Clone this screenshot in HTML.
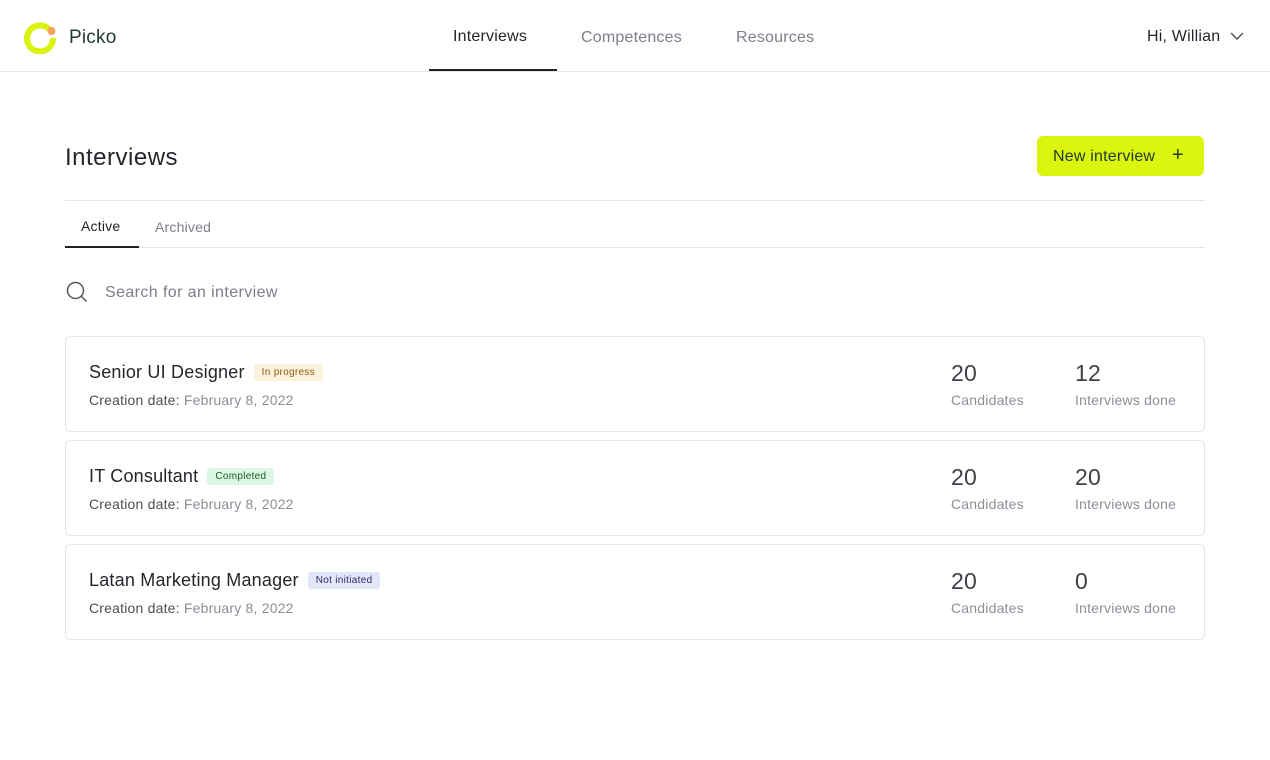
<!DOCTYPE html>
<html><head><style>
*{margin:0;padding:0;box-sizing:border-box}
body{width:1270px;height:760px;background:#fff;font-family:"Liberation Sans",sans-serif;color:#1f2328;position:relative;overflow:hidden;letter-spacing:0.2px}
.a{position:absolute;white-space:nowrap}
.card{position:absolute;left:65px;width:1140px;height:96px;border:1px solid #e3e5e8;border-radius:6px}
.t{position:absolute;left:23px;top:25px;font-size:18px;color:#23262b}
.badge{display:inline-block;font-size:10px;padding:3px 8px;border-radius:3px;vertical-align:3px;margin-left:9px;letter-spacing:0.3px}
.d{position:absolute;left:23px;top:55px;font-size:14px;color:#4b4f56}
.d span{color:#8a8f98}
.n{position:absolute;top:23px;font-size:23px;color:#3d4148}
.l{position:absolute;top:55px;font-size:14px;color:#8a8f98}
</style></head><body>
<svg class="a" style="left:22px;top:18px" width="40" height="36" viewBox="0 0 40 36">
<path d="M27.5 11.5 A13 13 0 1 0 31 20" fill="none" stroke="#d9f20f" stroke-width="6"/>
<circle cx="29.5" cy="13" r="4" fill="#f5a35c"/>
</svg>
<div class="a" style="left:69px;top:27px;font-size:19px;color:#1f3a2c">Picko</div>
<div class="a" style="left:453px;top:28px;font-size:16px;color:#1f2328">Interviews</div>
<div class="a" style="left:429px;top:69px;width:128px;height:2px;background:#1f2328"></div>
<div class="a" style="left:581px;top:29px;font-size:16px;color:#7a7f88">Competences</div>
<div class="a" style="left:736px;top:29px;font-size:16px;color:#7a7f88">Resources</div>
<div class="a" style="left:1147px;top:28px;font-size:16px;color:#1f2328">Hi, Willian</div>
<svg class="a" style="left:1230px;top:31px" width="14" height="10"><path d="M1 2l6 6 6-6" fill="none" stroke="#555" stroke-width="1.5"/></svg>
<div class="a" style="left:0;top:71px;width:1270px;height:1px;background:#e3e5e8"></div>
<div class="a" style="left:65px;top:144px;font-size:24px;color:#23262b;letter-spacing:0.5px">Interviews</div>
<div class="a" style="left:1037px;top:136px;width:167px;height:40px;background:#dcf50f;border-radius:6px;font-size:16px;color:#1f3a2c;padding:12px 0 0 16px">New interview<span style="position:absolute;left:135px;top:8px;font-size:20px">+</span></div>
<div class="a" style="left:65px;top:200px;width:1140px;height:1px;background:#e3e5e8"></div>
<div class="a" style="left:81px;top:218px;font-size:14px;color:#1f2328">Active</div>
<div class="a" style="left:155px;top:219px;font-size:14px;color:#7a7f88">Archived</div>
<div class="a" style="left:65px;top:246px;width:74px;height:2px;background:#1f2328"></div>
<div class="a" style="left:139px;top:247px;width:1066px;height:1px;background:#e3e5e8"></div>
<svg class="a" style="left:66px;top:281px" width="22" height="22"><circle cx="9.5" cy="9.5" r="8" fill="none" stroke="#555" stroke-width="1.5"/><path d="M15.5 15.5l5 5" stroke="#555" stroke-width="1.5"/></svg>
<div class="a" style="left:105px;top:284px;font-size:16px;color:#7a7f88;letter-spacing:0.4px">Search for an interview</div>

<div class="card" style="top:336px"><div class="t">Senior UI Designer<span class="badge" style="background:#fdf2dc;color:#8a5a10">In progress</span></div><div class="d">Creation date: <span>February 8, 2022</span></div>
<div class="n" style="left:885px">20</div><div class="l" style="left:885px">Candidates</div><div class="n" style="left:1009px">12</div><div class="l" style="left:1009px">Interviews done</div></div>
<div class="card" style="top:440px"><div class="t">IT Consultant<span class="badge" style="background:#dcf7e3;color:#1c5a2c">Completed</span></div><div class="d">Creation date: <span>February 8, 2022</span></div>
<div class="n" style="left:885px">20</div><div class="l" style="left:885px">Candidates</div><div class="n" style="left:1009px">20</div><div class="l" style="left:1009px">Interviews done</div></div>
<div class="card" style="top:544px"><div class="t">Latan Marketing Manager<span class="badge" style="background:#e3e5f8;color:#2c2f6a">Not initiated</span></div><div class="d">Creation date: <span>February 8, 2022</span></div>
<div class="n" style="left:885px">20</div><div class="l" style="left:885px">Candidates</div><div class="n" style="left:1009px">0</div><div class="l" style="left:1009px">Interviews done</div></div>
</body></html>
